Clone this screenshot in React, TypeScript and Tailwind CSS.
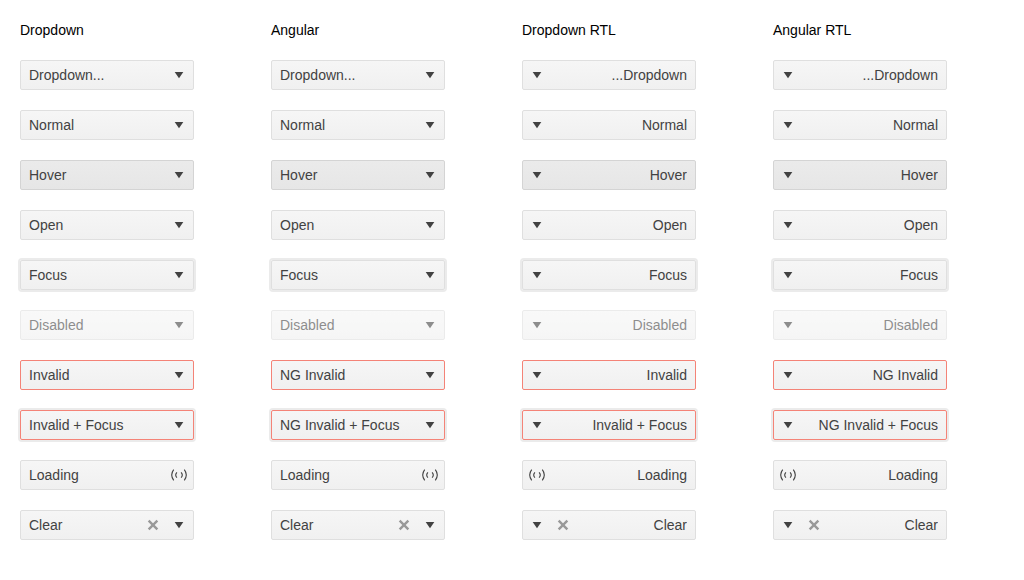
import { useId } from "react";
import clsx from "clsx";

type State = "normal" | "hover" | "focus" | "disabled" | "invalid" | "invalidFocus";

interface Item {
  text: string;
  state?: State;
  loading?: boolean;
  clearable?: boolean;
}

interface Column {
  title: string;
  rtl: boolean;
  items: Item[];
}

const stateClasses: Record<State, string> = {
  normal: "border-[#dfdfdf] from-[#f6f6f6] to-[#f0f0f0]",
  hover: "border-[#d4d4d4] from-[#ebebeb] to-[#e6e6e6]",
  focus: "border-[#dfdfdf] from-[#f6f6f6] to-[#f0f0f0] ring-2 ring-[#ebebeb]",
  disabled: "border-[#dfdfdf] from-[#f6f6f6] to-[#f0f0f0] opacity-60",
  invalid: "border-[#f48377] from-[#f6f6f6] to-[#f0f0f0]",
  invalidFocus: "border-[#f48377] from-[#f6f6f6] to-[#f0f0f0] ring-2 ring-[#ebebeb]",
};

function buildItems(prefix: string): Item[] {
  return [
    { text: "Dropdown..." },
    { text: "Normal" },
    { text: "Hover", state: "hover" },
    { text: "Open" },
    { text: "Focus", state: "focus" },
    { text: "Disabled", state: "disabled" },
    { text: `${prefix}Invalid`, state: "invalid" },
    { text: `${prefix}Invalid + Focus`, state: "invalidFocus" },
    { text: "Loading", loading: true },
    { text: "Clear", clearable: true },
  ];
}

const columns: Column[] = [
  { title: "Dropdown", rtl: false, items: buildItems("") },
  { title: "Angular", rtl: false, items: buildItems("NG ") },
  { title: "Dropdown RTL", rtl: true, items: buildItems("") },
  { title: "Angular RTL", rtl: true, items: buildItems("NG ") },
];

function ArrowIcon() {
  return (
    <svg className="size-4" viewBox="0 0 16 16" fill="currentColor" aria-hidden="true">
      <path d="M3.7 5h8.6L8 11.2z" />
    </svg>
  );
}

function ClearIcon() {
  return (
    <svg className="size-4" viewBox="0 0 16 16" fill="currentColor" aria-hidden="true">
      <path d="M13.2 4.5 11.5 2.8 8 6.3 4.5 2.8 2.8 4.5 6.3 8l-3.5 3.5 1.7 1.7L8 9.7l3.5 3.5 1.7-1.7L9.7 8z" />
    </svg>
  );
}

function LoadingIcon() {
  return (
    <svg
      className="h-4 w-[18px]"
      viewBox="0 0 18 16"
      fill="none"
      stroke="currentColor"
      strokeWidth="1.1"
      aria-hidden="true"
    >
      <path d="M3.7 2.7Q-.3 8 3.7 13.3M14.3 2.7Q18.3 8 14.3 13.3" />
      <path d="M6.9 5.3Q4.5 8 6.9 10.7M11.1 5.3Q13.5 8 11.1 10.7" />
    </svg>
  );
}

function Dropdown({ item, rtl, titleId }: { item: Item; rtl: boolean; titleId: string }) {
  const id = useId();
  return (
    <div
      dir={rtl ? "rtl" : "ltr"}
      className={clsx(
        "grid h-[30px] w-[174px] grid-cols-[1fr_auto_28px] items-center rounded-xs border bg-linear-to-b bg-origin-border text-[#424242]",
        stateClasses[item.state ?? "normal"],
      )}
    >
      <select
        id={id}
        aria-labelledby={`${titleId} ${id}`}
        disabled={item.state === "disabled"}
        className="col-span-full col-start-1 row-start-1 h-7 w-full appearance-none bg-transparent px-2 text-sm opacity-100 outline-none"
      >
        <option>{item.text}</option>
      </select>
      {item.clearable && (
        <button
          type="button"
          aria-label="Clear"
          className="col-start-2 row-start-1 flex h-7 w-6 items-center justify-center opacity-50"
        >
          <ClearIcon />
        </button>
      )}
      <span className="pointer-events-none col-start-3 row-start-1 flex h-7 items-center justify-center">
        {item.loading ? <LoadingIcon /> : <ArrowIcon />}
      </span>
    </div>
  );
}

export default function App() {
  const baseId = useId();
  return (
    <main className="grid grid-cols-4 gap-x-5 bg-white p-5 font-['Liberation_Sans',Arial,sans-serif] text-sm text-black">
      {columns.map((column, index) => {
        const titleId = `${baseId}-${index}`;
        return (
          <section key={column.title} className="flex flex-col gap-5">
            <h2 id={titleId}>{column.title}</h2>
            {column.items.map((item) => (
              <Dropdown key={item.text} item={item} rtl={column.rtl} titleId={titleId} />
            ))}
          </section>
        );
      })}
    </main>
  );
}
